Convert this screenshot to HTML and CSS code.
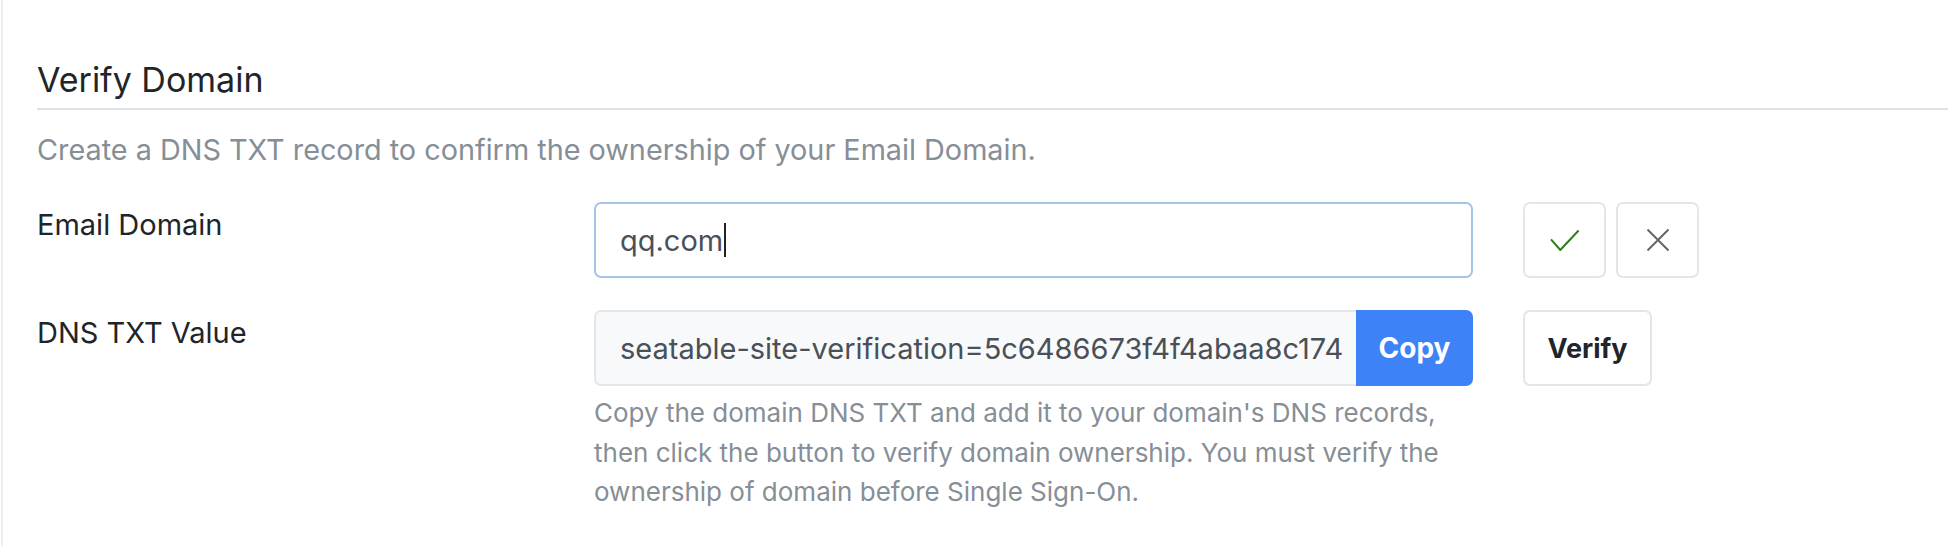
FILE: index.html
```html
<!DOCTYPE html>
<html lang="en">
<head>
<meta charset="utf-8">
<title>Verify Domain</title>
<link rel="stylesheet" href="styles.css">
</head>
<body>
<div class="page">
  <section class="panel">
    <h2 class="title">Verify Domain</h2>
    <p class="desc">Create a DNS TXT record to confirm the ownership of your Email Domain.</p>

    <div class="form-row first">
      <label class="label">Email Domain</label>
      <div class="field">
        <div class="control focused"><span class="value">qq.com</span><span class="caret"></span></div>
      </div>
      <div class="actions">
        <button class="icon-btn" type="button" aria-label="Confirm">
          <svg width="30" height="22" viewBox="0 0 30 22"><path d="M1 10.3 L10.3 21 L28.6 1.5" fill="none" stroke="#2e7d18" stroke-width="2"/></svg>
        </button>
        <button class="icon-btn" type="button" aria-label="Cancel">
          <svg width="24" height="24" viewBox="0 0 24 24"><path d="M1.5 1.5 L22.5 22.5 M22.5 1.5 L1.5 22.5" fill="none" stroke="#666666" stroke-width="2"/></svg>
        </button>
      </div>
    </div>

    <div class="form-row">
      <label class="label">DNS TXT Value</label>
      <div class="field">
        <div class="input-group">
          <div class="control readonly"><span class="value clip">seatable-site-verification=5c6486673f4f4abaa8c1748e</span></div>
          <button class="btn-copy" type="button">Copy</button>
        </div>
        <p class="help">Copy the domain DNS TXT and add it to your domain's DNS records, then click the button to verify domain ownership. You must verify the ownership of domain before Single Sign-On.</p>
      </div>
      <div class="actions">
        <button class="btn-verify" type="button">Verify</button>
      </div>
    </div>
  </section>
</div>
</body>
</html>
```

FILE: styles.css
```css
* { box-sizing: border-box; }

html, body {
  margin: 0;
  padding: 0;
  background: #ffffff;
}

body {
  font-family: Inter, "Noto Sans", "Liberation Sans", sans-serif;
  color: #212529;
}

.page {
  margin-left: 1px;
  border-left: 2px solid #eceef0;
  min-height: 546px;
  padding-left: 34px;
}

.panel {
  display: flex;
  flex-direction: column;
}

.title {
  margin: 0;
  padding-top: 59px;
  padding-bottom: 8px;
  font-size: 34px;
  font-weight: 400;
  line-height: 41px;
  color: #212529;
  border-bottom: 2px solid #dee2e6;
}

.desc {
  margin: 19px 0 0;
  font-size: 28.8px;
  line-height: 42px;
  color: #868e96;
}

.form-row {
  display: flex;
  align-items: flex-start;
  margin-top: 32px;
}

.form-row.first {
  margin-top: 31px;
}

.label {
  width: 557px;
  flex: none;
  font-size: 29px;
  line-height: 42px;
  margin-top: 2px;
  color: #212529;
}

.field {
  width: 879px;
  flex: none;
}

.control {
  height: 76px;
  display: flex;
  align-items: center;
  padding: 0 24px 0 24px;
  font-size: 29px;
  color: #495057;
  border: 2px solid #dee2e6;
  border-radius: 7px;
  background: #ffffff;
  white-space: nowrap;
  overflow: hidden;
}

.control.focused {
  border-color: #a6c3ea;
}

.caret {
  display: inline-block;
  width: 2px;
  height: 34px;
  margin-left: 1px;
  background: #222;
}

.input-group {
  display: flex;
}

.control.readonly {
  flex: 1;
  min-width: 0;
  padding-right: 12px;
  background: #f8f9fa;
  border-color: #e4e7ea;
  border-right: none;
  border-radius: 7px 0 0 7px;
}

.value.clip {
  flex: 1;
  min-width: 0;
  overflow: hidden;
}

.btn-copy {
  flex: none;
  width: 117px;
  height: 76px;
  border: none;
  border-radius: 0 7px 7px 0;
  background: #3d83f7;
  color: #ffffff;
  font-family: inherit;
  font-size: 28px;
  font-weight: 700;
  padding: 0;
}

.help {
  margin: 7px 0 0;
  font-size: 26px;
  line-height: 39.5px;
  color: #868e96;
}

.actions {
  display: flex;
  gap: 10px;
  margin-left: 50px;
}

.icon-btn {
  width: 83px;
  height: 76px;
  display: flex;
  align-items: center;
  justify-content: center;
  background: #ffffff;
  border: 2px solid #e2e6ea;
  border-radius: 7px;
  padding: 0;
}

.btn-verify {
  width: 129px;
  height: 76px;
  background: #ffffff;
  border: 2px solid #e2e6ea;
  border-radius: 7px;
  font-family: inherit;
  font-size: 27px;
  font-weight: 700;
  color: #212529;
  padding: 0;
}
```
